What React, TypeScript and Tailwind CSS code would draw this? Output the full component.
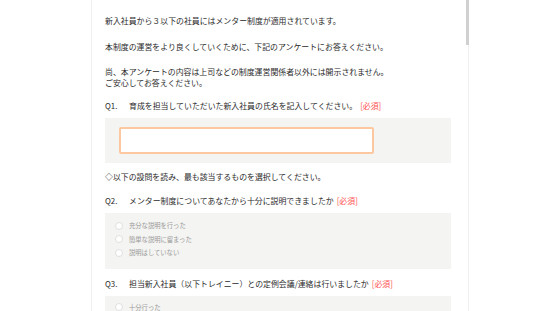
import React from 'react';

const font = { fontFamily: '"Noto Sans CJK JP", "Noto Sans", sans-serif' };

const Required = () => <span className="ml-[3px] text-[#ff4f4f]">[必須]</span>;

const Question: React.FC<{ no: string; text: string }> = ({ no, text }) => (
  <div className="flex h-[11px] items-center leading-[11px]">
    <span className="w-[24px] shrink-0">{no}</span>
    <span>{text}</span>
    <Required />
  </div>
);

const Radio: React.FC<{ label: string }> = ({ label }) => (
  <div className="flex h-[13.5px] items-center">
    <span className="h-[8px] w-[8px] shrink-0 rounded-full border border-[#e0e0e0] bg-white" />
    <span className="ml-[6px] text-[6.3px] text-[#999]">{label}</span>
  </div>
);

const App: React.FC = () => {
  return (
    <div className="flex h-[311px] w-[560px] overflow-hidden bg-white" style={font}>
      <div className="ml-[91px] w-[378px] relative border-l border-r border-[#efefef]">
        {/* scrollbar thumb */}
        <div className="absolute right-[-1px] top-0 h-[45px] w-[3px] bg-[#d0d0d0]" />
        <div className="pl-[13px] pr-[17px] pt-[14.5px] text-[7.9px] leading-[11px] text-[#2a2a2a]">
          <p>新入社員から３以下の社員にはメンター制度が適用されています。</p>
          <p className="mt-[15.5px]">本制度の運営をより良くしていくために、下記のアンケートにお答えください。</p>
          <p className="mt-[14px]">
            尚、本アンケートの内容は上司などの制度運営関係者以外には開示されません。
            <br />
            ご安心してお答えください。
          </p>

          <div className="mt-[12px]">
            <Question no="Q1." text="育成を担当していただいた新入社員の氏名を記入してください。" />
          </div>
          <div className="mt-[6.5px] h-[45px] bg-[#f4f4f2] pl-[14px] pt-[9px]">
            <div className="h-[27px] w-[255px] rounded-[2px] border-2 border-[#fdc8a0] bg-white" />
          </div>

          <p className="mt-[8.5px]">◇以下の設問を読み、最も該当するものを選択してください。</p>

          <div className="mt-[13px]">
            <Question no="Q2." text="メンター制度についてあなたから十分に説明できましたか" />
          </div>
          <div className="mt-[6.5px] h-[56px] bg-[#f4f4f2] pl-[10px] pt-[6.5px]">
            <Radio label="充分な説明を行った" />
            <Radio label="簡単な説明に留まった" />
            <Radio label="説明はしていない" />
          </div>

          <div className="mt-[9.5px]">
            <Question no="Q3." text="担当新入社員（以下トレイニー）との定例会議/連絡は行いましたか" />
          </div>
          <div className="mt-[6.5px] h-[56px] bg-[#f4f4f2] pl-[10px] pt-[5px]">
            <Radio label="十分行った" />
            <Radio label="時々行った" />
            <Radio label="行っていない" />
          </div>
        </div>
      </div>
    </div>
  );
};

export default App;
